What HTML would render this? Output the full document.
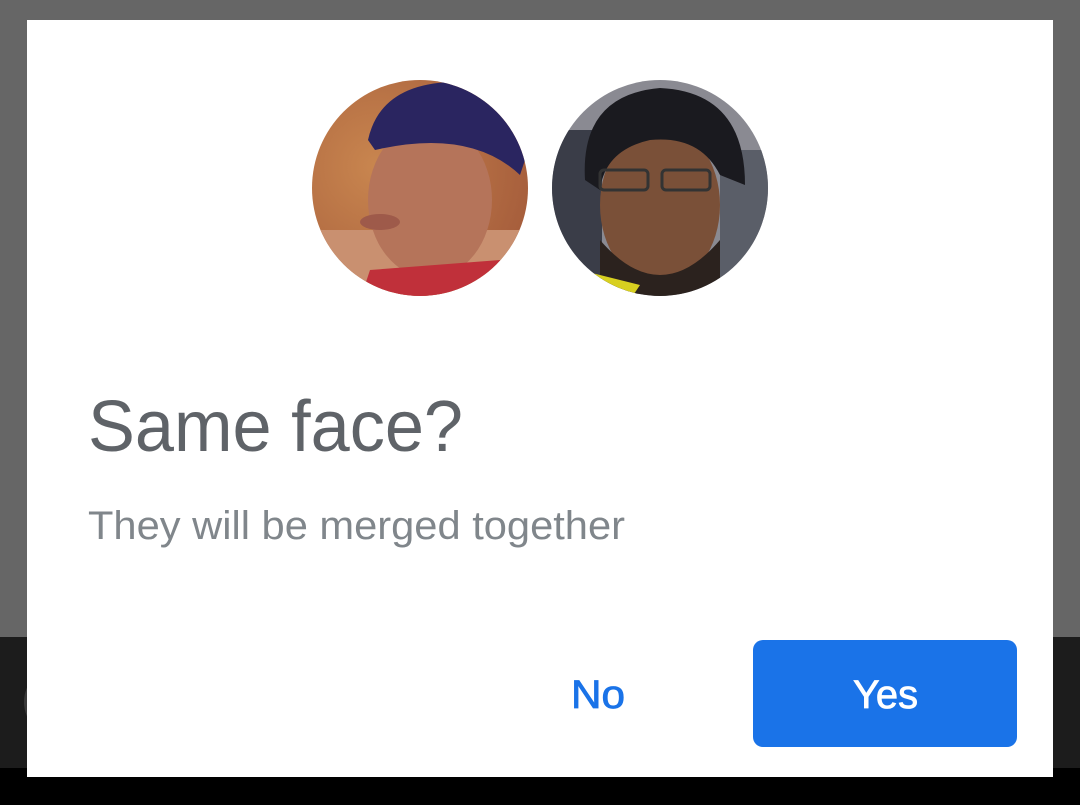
<!DOCTYPE html>
<html><head><style>
html,body{margin:0;padding:0;width:1080px;height:805px;overflow:hidden;background:#000}
</style></head><body>
<svg width="1080" height="805" viewBox="0 0 1080 805" xmlns="http://www.w3.org/2000/svg">
<defs>
<clipPath id="c1"><circle cx="420" cy="188" r="108"/></clipPath>
<clipPath id="c2"><circle cx="660" cy="188" r="108"/></clipPath>
<radialGradient id="bg1" cx="0.3" cy="0.4" r="0.8"><stop offset="0" stop-color="#c9864f"/><stop offset="1" stop-color="#a35a3a"/></radialGradient>
</defs>
<rect x="0" y="0" width="1080" height="637" fill="#666666"/>
<rect x="0" y="637" width="1080" height="131" fill="#1c1c1c"/>
<circle cx="60" cy="702" r="36" fill="#3a3a3a"/>
<rect x="0" y="768" width="1080" height="37" fill="#000"/>
<rect x="27" y="20" width="1026" height="757" fill="#fff"/>

<g clip-path="url(#c1)">
<rect x="312" y="80" width="216" height="216" fill="url(#bg1)"/>
<rect x="312" y="230" width="216" height="70" fill="#c99070"/>
<ellipse cx="430" cy="200" rx="62" ry="78" fill="#b5745a"/>
<path d="M368 140 Q380 85 450 82 Q520 90 525 160 L520 175 Q470 128 375 150 Z" fill="#2a2560"/>
<path d="M370 270 L500 260 L520 300 L360 300 Z" fill="#c0303a"/>
<ellipse cx="380" cy="222" rx="20" ry="8" fill="#9e5a4a"/>
</g>

<g clip-path="url(#c2)">
<rect x="552" y="80" width="216" height="216" fill="#8a8a92"/>
<rect x="552" y="130" width="50" height="170" fill="#3a3d48"/>
<rect x="720" y="150" width="48" height="150" fill="#5a5e68"/>
<ellipse cx="660" cy="205" rx="60" ry="80" fill="#7a5038"/>
<path d="M585 180 Q580 95 660 88 Q745 92 745 185 L720 175 Q700 135 650 140 Q605 150 600 190 Z" fill="#1a1a1f"/>
<path d="M600 240 Q660 310 720 240 L720 300 L600 300 Z" fill="#2b221e"/>
<path d="M580 270 L640 285 L630 300 L575 300 Z" fill="#d8d020"/>
<rect x="600" y="170" width="48" height="20" rx="4" fill="none" stroke="#333" stroke-width="3"/>
<rect x="662" y="170" width="48" height="20" rx="4" fill="none" stroke="#333" stroke-width="3"/>
</g>

<text x="88" y="451" font-family="Liberation Sans, sans-serif" font-size="72" fill="#5f6368" textLength="375" lengthAdjust="spacingAndGlyphs">Same face?</text>
<text x="88" y="539" font-family="Liberation Sans, sans-serif" font-size="40" fill="#80868b" textLength="537" lengthAdjust="spacingAndGlyphs">They will be merged together</text>

<text x="571" y="708" font-family="Liberation Sans, sans-serif" font-size="40" fill="#1a73e8" stroke="#1a73e8" stroke-width="0.8" textLength="54" lengthAdjust="spacingAndGlyphs">No</text>
<rect x="753" y="640" width="264" height="107" rx="10" fill="#1a73e8"/>
<text x="853" y="708" font-family="Liberation Sans, sans-serif" font-size="40" fill="#fff" stroke="#fff" stroke-width="0.8" textLength="65" lengthAdjust="spacingAndGlyphs">Yes</text>
</svg>
</body></html>
